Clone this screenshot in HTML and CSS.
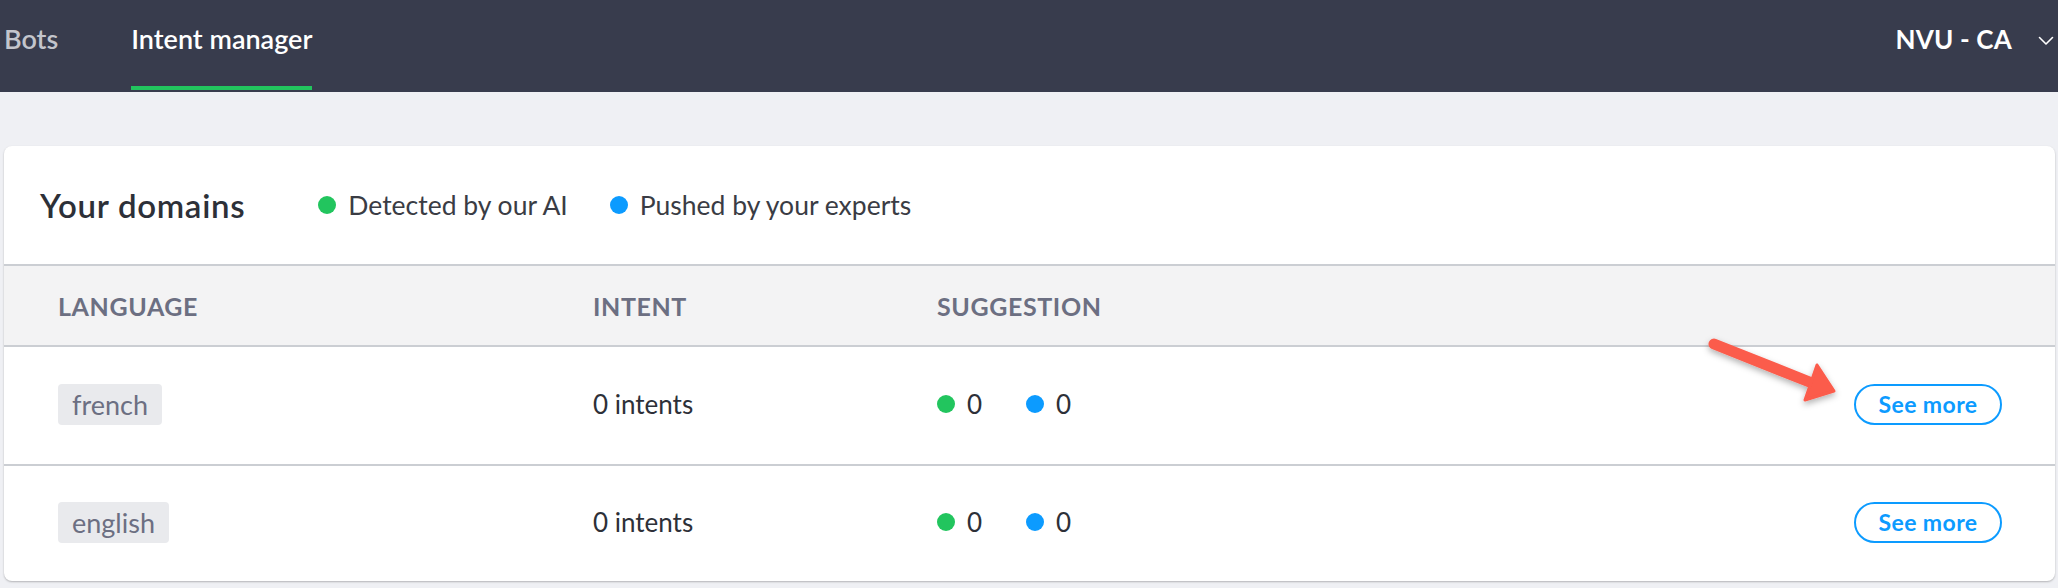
FILE: index.html
```html
<!DOCTYPE html>
<html lang="en">
<head>
<meta charset="utf-8">
<title>Intent manager</title>
<link rel="stylesheet" href="styles.css">
</head>
<body>
<header class="topbar">
  <nav class="tabs">
    <a class="tab">Bots</a>
    <a class="tab tab-active">Intent manager</a>
  </nav>
  <div class="account">
    <span class="account-name">NVU - CA</span>
    <svg class="chevron" viewBox="0 0 16 10" width="16" height="10" aria-hidden="true">
      <path d="M1.5 1.5 L8 8 L14.5 1.5" fill="none" stroke="#ffffff" stroke-width="1.6" stroke-linecap="round" stroke-linejoin="round"/>
    </svg>
  </div>
</header>

<main class="page">
  <section class="card">
    <div class="card-head">
      <h1 class="card-title">Your domains</h1>
      <div class="legend">
        <span class="legend-item"><span class="dot dot-green"></span>Detected by our AI</span>
        <span class="legend-item"><span class="dot dot-blue"></span>Pushed by your experts</span>
      </div>
    </div>
    <div class="table">
      <div class="row row-head">
        <div class="cell">LANGUAGE</div>
        <div class="cell">INTENT</div>
        <div class="cell">SUGGESTION</div>
        <div class="cell"></div>
      </div>
      <div class="row row-body">
        <div class="cell"><span class="chip">french</span></div>
        <div class="cell">0 intents</div>
        <div class="cell suggest">
          <span class="count"><span class="dot dot-green"></span>0</span>
          <span class="count"><span class="dot dot-blue"></span>0</span>
        </div>
        <div class="cell cell-action"><button class="btn">See more</button></div>
      </div>
      <div class="row row-body row-last">
        <div class="cell"><span class="chip">english</span></div>
        <div class="cell">0 intents</div>
        <div class="cell suggest">
          <span class="count"><span class="dot dot-green"></span>0</span>
          <span class="count"><span class="dot dot-blue"></span>0</span>
        </div>
        <div class="cell cell-action"><button class="btn">See more</button></div>
      </div>
    </div>
  </section>

  <svg class="annotation" viewBox="0 0 150 90" width="150" height="90" aria-hidden="true">
    <defs>
      <filter id="shadow" x="-20%" y="-20%" width="140%" height="160%">
        <feDropShadow dx="0" dy="3" stdDeviation="3" flood-color="#000000" flood-opacity="0.3"/>
      </filter>
    </defs>
    <g filter="url(#shadow)" fill="#fb5b4b" stroke="#fb5b4b">
      <line x1="14" y1="14" x2="112" y2="53" stroke-width="11" stroke-linecap="round"/>
      <polygon points="117,35 134,61 105,70" stroke-width="3" stroke-linejoin="round"/>
    </g>
  </svg>
</main>
</body>
</html>
```

FILE: styles.css
```css
* {
  box-sizing: border-box;
}

html, body {
  margin: 0;
  padding: 0;
}

body {
  width: 2058px;
  height: 588px;
  overflow: hidden;
  background: #eff0f4;
  font-family: "Lato", "Inter", "Liberation Sans", sans-serif;
  color: #2d3038;
}

/* Top bar */
.topbar {
  height: 92px;
  background: #383c4d;
  display: flex;
  align-items: flex-start;
  padding-left: 4px;
  padding-right: 4px;
}

.tabs {
  display: flex;
  gap: 73px;
}

.tab {
  height: 90px;
  padding-top: 24px;
  line-height: 30px;
  font-size: 27px;
  font-weight: 600;
  color: #c3c5cc;
  border-bottom: 4px solid transparent;
  text-decoration: none;
}

.tab-active {
  color: #ffffff;
  border-bottom-color: #22c55e;
}

.account {
  margin-left: auto;
  display: flex;
  align-items: center;
  gap: 26px;
  height: 78px;
}

.account-name {
  color: #ffffff;
  font-size: 26px;
  font-weight: 700;
  letter-spacing: 0.2px;
}

.chevron {
  display: block;
  margin-top: 4px;
}

/* Page */
.page {
  position: relative;
  padding: 54px 3px 0 4px;
}

.card {
  background: #ffffff;
  border-radius: 8px;
  box-shadow: 0 1px 2px rgba(0, 0, 0, 0.25);
  overflow: hidden;
}

.card-head {
  height: 118px;
  display: flex;
  align-items: center;
  padding-left: 36px;
}

.card-title {
  margin: 0;
  font-size: 33px;
  font-weight: 600;
  letter-spacing: 0.7px;
  color: #2d3038;
}

.legend {
  display: flex;
  align-items: center;
  gap: 42px;
  margin-left: 73px;
}

.legend-item {
  display: flex;
  align-items: center;
  gap: 12px;
  font-size: 26.5px;
  color: #3a3c44;
}

.dot {
  display: inline-block;
  width: 18px;
  height: 18px;
  border-radius: 50%;
  flex: none;
}

.dot-green {
  background: #22c55e;
}

.dot-blue {
  background: #0c9bff;
}

/* Table */
.table {
  border-top: 2px solid #cbced3;
}

.row {
  display: grid;
  grid-template-columns: 535px 344px 1fr auto;
  align-items: center;
  padding-left: 54px;
  padding-right: 53px;
  border-bottom: 2px solid #cbced3;
}

.row-head {
  height: 81px;
  background: #f3f3f4;
  font-size: 25px;
  font-weight: 700;
  color: #6c6f82;
  letter-spacing: 0.6px;
}

.row-body {
  height: 119px;
  font-size: 26px;
  color: #2d3038;
}

.row-body .cell {
  padding-bottom: 3px;
}

.row-last {
  height: 115px;
  border-bottom: none;
}

.chip {
  display: inline-block;
  height: 41px;
  line-height: 41px;
  padding: 0 14px;
  border-radius: 4px;
  background: #e9eaed;
  color: #6c6f82;
  font-size: 27px;
}

.suggest {
  display: flex;
  gap: 44px;
}

.count {
  display: flex;
  align-items: center;
  gap: 12px;
}

.cell-action {
  display: flex;
  justify-content: flex-end;
}

.btn {
  width: 148px;
  height: 41px;
  border: 2px solid #0c9bff;
  border-radius: 21px;
  background: #ffffff;
  color: #0c9bff;
  font-family: inherit;
  font-size: 23px;
  font-weight: 700;
  letter-spacing: 0.4px;
  padding: 0;
  cursor: pointer;
}

/* Annotation arrow overlaid on the table */
.annotation {
  position: absolute;
  left: 1700px;
  top: 238px;
}
```
